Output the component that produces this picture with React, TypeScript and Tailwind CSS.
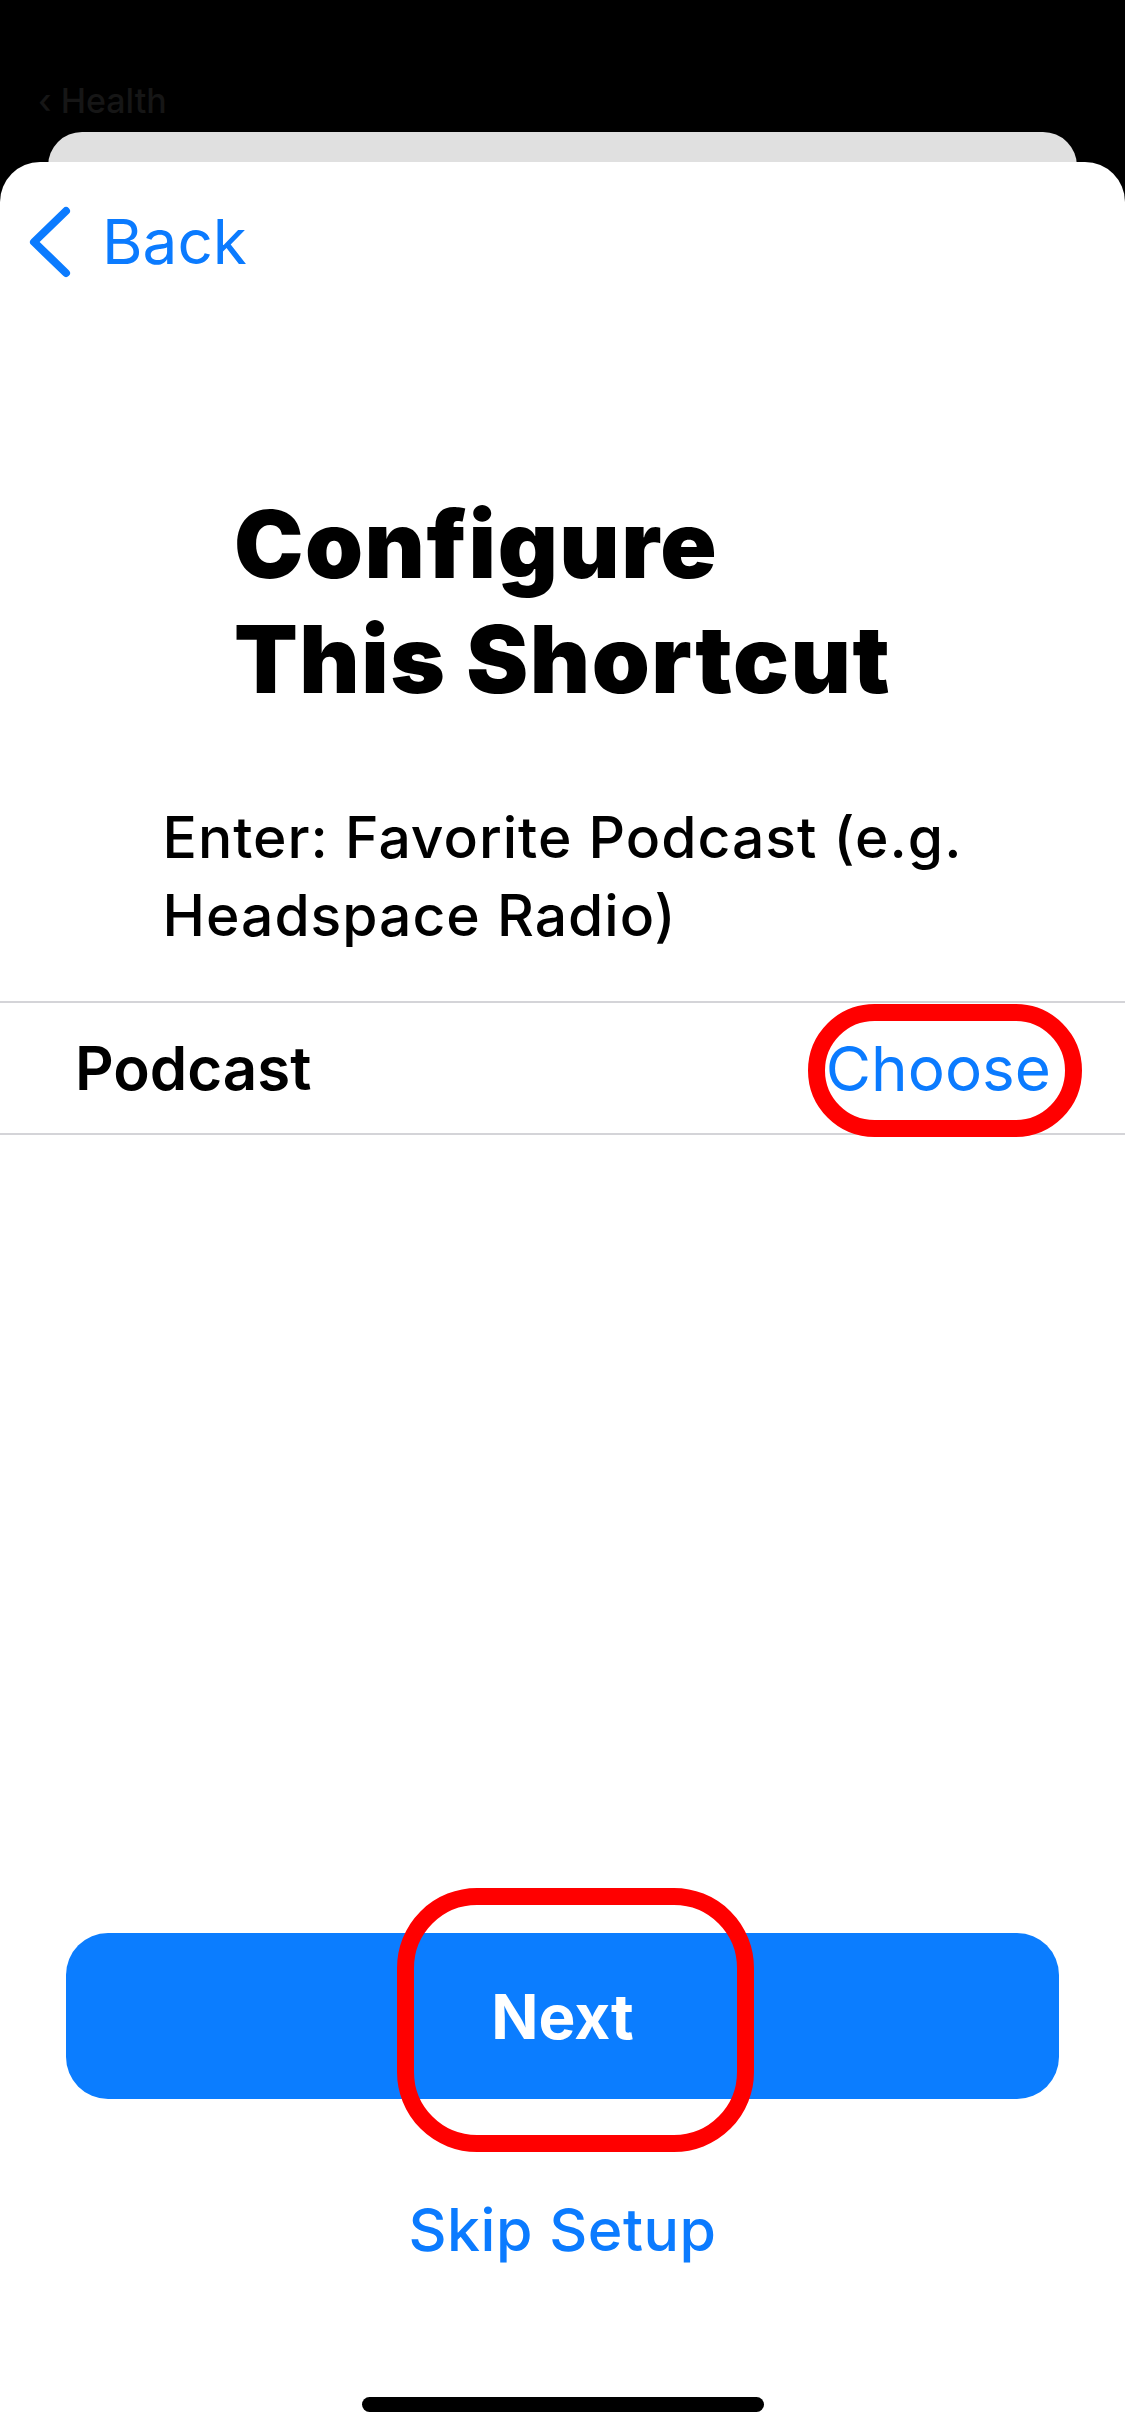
import { FC } from "react";

const Chevron: FC = () => (
  <svg width="48" height="76" viewBox="0 0 48 76" fill="none">
    <path
      d="M40 7 L8 38 L40 69"
      stroke="#0b7bff"
      strokeWidth="8"
      strokeLinecap="round"
      strokeLinejoin="round"
    />
  </svg>
);

const App: FC = () => {
  return (
    <div className="w-[1125px] h-[2436px] bg-black flex flex-col overflow-hidden font-['Inter','Liberation_Sans',sans-serif]">
      {/* dimmed parent screen */}
      <div className="h-[132px] pt-[84px] pl-[38px]">
        <p className="text-[34px] leading-[34px] font-medium text-[#161616]">‹ Health</p>
      </div>
      <div className="h-[70px] mx-[48px] rounded-t-[34px] bg-[#e0e0e0] shrink-0"></div>

      {/* sheet */}
      <div className="-mt-[40px] h-[2274px] bg-white rounded-t-[40px] flex flex-col relative">
        <div className="mt-[45px] h-[70px] flex items-center pl-[26px] gap-[28px]">
          <Chevron />
          <span className="text-[62px] text-[#0b7bff] leading-none">Back</span>
        </div>

        <div className="mt-[210px] flex justify-center">
          <h1 className="text-[93px] leading-[115px] font-black text-black tracking-[1.5px]">
            Configure
            <br />
            This Shortcut
          </h1>
        </div>

        <div className="mt-[82px] flex justify-center">
          <p className="text-[57px] leading-[78px] font-medium text-black tracking-[1px]">
            Enter: Favorite Podcast (e.g.
            <br />
            Headspace Radio)
          </p>
        </div>

        <div className="mt-[46px] h-[2px] bg-[#d4d4d8]"></div>
        <div className="h-[130px] flex items-center justify-between pl-[75px] pr-[74px] relative">
          <span className="text-[60px] font-semibold text-black">Podcast</span>
          <span className="text-[62px] text-[#0b7bff]">Choose</span>
          <div className="absolute right-[43px] top-[1px] w-[274px] h-[133px] rounded-full border-[17px] border-[#ff0000]"></div>
        </div>
        <div className="h-[2px] bg-[#d4d4d8]"></div>

        <div className="mt-[798px] mx-[66px] h-[166px] rounded-[42px] bg-[#0b7dff] flex items-center justify-center relative">
          <span className="text-[62px] font-bold text-white">Next</span>
          <div className="absolute left-[331px] -top-[45px] w-[357px] h-[264px] rounded-[80px] border-[17px] border-[#ff0000]"></div>
        </div>

        <div className="mt-[95px] h-[72px] flex justify-center">
          <span className="text-[59px] leading-[72px] font-medium text-[#0b7bff] tracking-[0.5px]">Skip Setup</span>
        </div>

        <div className="mt-[131px] self-center w-[402px] h-[15px] rounded-full bg-black"></div>
      </div>
    </div>
  );
};

export default App;
